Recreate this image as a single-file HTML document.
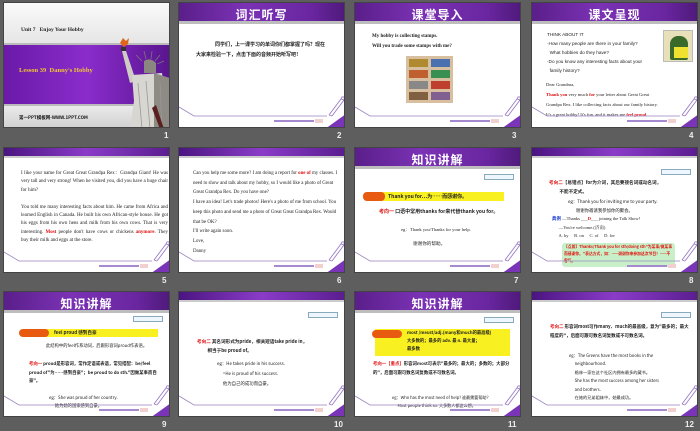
<!DOCTYPE html>
<html><head><meta charset="utf-8"><style>
*{margin:0;padding:0;box-sizing:border-box}
body{width:700px;height:431px;background:#5e5e5e;position:relative;overflow:hidden;font-family:"Liberation Serif","Noto Serif CJK SC",serif}
.s{position:absolute;width:167px;height:126px;background:#fff;overflow:hidden;border:1px solid #444}
.n{position:absolute;color:#eee;font:bold 8px "Liberation Sans",sans-serif}
.hd{position:absolute;left:0;top:0;width:100%;height:21px;background:linear-gradient(90deg,#5a1f8a,#7b32b5 40%,#6a26a0 80%,#4f1a7c);border-bottom:3px solid #bdbdbd}
.hd b{position:absolute;left:0;right:0;top:3px;text-align:center;color:#fff;font:bold 12px "Noto Sans CJK SC",sans-serif;letter-spacing:1px}
.th{position:absolute;left:0;top:0;width:100%;height:10px;background:linear-gradient(90deg,#4a1580,#8a3cc8 50%,#5a1e90);border-bottom:2px solid #ccc}
.t{position:absolute;font-size:5px;line-height:8px;color:#222}
.r{color:#e01010;font-weight:bold}
.tag{position:absolute;right:6px;width:30px;height:6px;border:1px solid #8ab;background:#eef6ff}
.ft{position:absolute;left:0;top:0}
.cn{font-family:"Noto Sans CJK SC",sans-serif}
</style></head><body>

<svg width="0" height="0" style="position:absolute"><defs>
<g id="ftr"><polyline points="0,104 15,113 148,113" fill="none" stroke="#9b84c0" stroke-width="0.8"/>
<polygon points="146,126 167,126 167,111" fill="#7a34b8"/>
<path d="M150,112 L162,96 M153,113 L165,97 M150,112 L153,113 M162,96 L165,97 Q166,93 163,94 Z" stroke="#9a7cc6" stroke-width="0.9" fill="none"/>
<rect x="95" y="117" width="40" height="2" fill="#a58ad0"/><rect x="136" y="116" width="8" height="4" fill="#f3d0d0"/></g>
</defs></svg>

<!-- slide 1 -->
<div class="s" style="left:3px;top:2px;background:linear-gradient(#fafafa,#e4e4e4 35%,#ddd)">
<div style="position:absolute;left:0;top:40px;width:100%;height:63px;background:linear-gradient(90deg,#6a1aa8,#8a2ccc 50%,#5a1590);border-top:2px solid #bbb;border-bottom:2px solid #bbb"></div>
<div style="position:absolute;left:0;top:103px;width:100%;height:23px;background:linear-gradient(#eaeaea,#d0d0d0)"></div>
<div class="t" style="left:17px;top:23px;font-size:5.5px;font-weight:bold">Unit 7 &nbsp; Enjoy Your Hobby</div>
<div class="t" style="left:15px;top:64px;font-size:6.5px;font-weight:bold;color:#f2c530">Lesson 39 &nbsp;Danny's Hobby</div>
<div class="t cn" style="left:15px;top:111px;font-size:4.5px;font-weight:bold;color:#111">第一PPT模板网-WWW.1PPT.COM</div>
<svg class="ft" width="167" height="126">
<path d="M120,44 L116,40 L119,35 L122,38 L125,35 L124,41 Z" fill="#e0641a"/>
<rect x="117" y="44" width="5" height="4" fill="#333"/>
<path d="M118,48 L122,48 L132,78 L126,80 Z" fill="#cfcbc5"/>
<path d="M138,58 L132,52 M142,56 L140,48 M147,56 L148,48 M151,58 L156,52 M153,61 L160,58" stroke="#777" stroke-width="0.8"/>
<path d="M140,58 Q146,54 152,60 L152,70 L140,70 Z" fill="#8a8680"/>
<path d="M128,72 L158,70 L166,126 L126,126 L130,98 Z" fill="#d8d6d0"/>
<path d="M150,70 L166,75 L166,126 L150,126 Z" fill="#8e8a84"/>
<path d="M134,80 L138,126 M142,78 L146,126 M156,80 L158,126" stroke="#999" stroke-width="0.8"/>
<path d="M148,105 L156,126 L160,126 L152,102 Z" fill="#5a2020"/></svg>
</div>
<div class="n" style="left:164px;top:131px">1</div>

<!-- slide 2 -->
<div class="s" style="left:178px;top:2px">
<div class="hd"><b>词汇听写</b></div>
<div class="t cn" style="left:28px;top:37px;font-size:5px;font-weight:bold;line-height:10px;width:135px">&nbsp; &nbsp; &nbsp; &nbsp;同学们，上一课学习的单词你们都掌握了吗？现在</div>
<div class="t cn" style="left:17px;top:37px;font-size:5px;font-weight:bold;line-height:10px;width:145px;text-indent:11px"></div>
<div class="t cn" style="left:17px;top:47px;font-size:5px;font-weight:bold;line-height:10px">大家来检验一下，点击下面的音频开始听写吧！</div>
<svg class="ft" width="167" height="126"><use href="#ftr"/></svg>
</div>
<div class="n" style="left:337px;top:131px">2</div>

<!-- slide 3 -->
<div class="s" style="left:354px;top:2px">
<div class="hd"><b>课堂导入</b></div>
<div class="t" style="left:17px;top:29px;font-weight:bold;font-size:5px;line-height:10px">My hobby is collecting stamps.<br>Will you trade some stamps with me?</div>
<div style="position:absolute;left:51px;top:53px;width:47px;height:47px;background:#d8bfa0;padding:3px;display:grid;grid-template-columns:1fr 1fr;gap:3px">
<i style="background:#b08a30"></i><i style="background:#4a70b0"></i><i style="background:#c06030"></i><i style="background:#3a9050"></i><i style="background:#888"></i><i style="background:#c04030"></i><i style="background:#806040"></i><i style="background:#806090"></i></div>
<svg class="ft" width="167" height="126"><use href="#ftr"/></svg>
</div>
<div class="n" style="left:512px;top:131px">3</div>

<!-- slide 4 -->
<div class="s" style="left:531px;top:2px">
<div class="hd"><b>课文呈现</b></div>
<div style="position:absolute;left:131px;top:27px;width:30px;height:32px;background:#e8e0b8;border:1px solid #bbb"><div style="position:absolute;left:6px;top:5px;width:18px;height:24px;background:#3a6a2a;border-radius:8px 8px 2px 2px"></div><div style="position:absolute;left:10px;top:16px;width:14px;height:11px;background:#f0e030"></div></div>
<div class="t" style="left:15px;top:27px;font-family:'Liberation Sans',sans-serif;font-size:4.7px;line-height:9px">THINK ABOUT IT<br>·How many people are there in your family?<br>&nbsp; What hobbies do they have?<br>·Do you know any interesting facts about your<br>&nbsp; family history?</div>
<div class="t" style="left:14px;top:77px;font-size:4.6px;line-height:10px;white-space:nowrap">Dear Grandma,<br><span class="r">Thank you</span> very much <span class="r">for</span> your letter about Great Great<br>Grandpa Rex. I like collecting facts about our family history.<br>It's a great hobby! It's fun, and it makes me <span class="r">feel proud</span>.</div>
<svg class="ft" width="167" height="126"><use href="#ftr"/></svg>
</div>
<div class="n" style="left:689px;top:131px">4</div>

<!-- slide 5 -->
<div class="s" style="left:3px;top:147px">
<div class="th"></div>
<div class="t" style="left:17px;top:22px;font-size:5px;line-height:8.4px;width:147px;text-align:justify">I like your name for Great Great Grandpa Rex：Grandpa Giant! He was very tall and very strong! When he visited you, did you have a huge chair for him?<br><br>You told me many interesting facts about him. He came from Africa and learned English in Canada. He built his own African-style house. He got his eggs from his own hens and milk from his own cows. That is very interesting. <span class="r">Most</span> people don't have cows or chickens <span class="r">anymore</span>. They buy their milk and eggs at the store.</div>
<svg class="ft" width="167" height="126"><use href="#ftr"/></svg>
</div>
<div class="n" style="left:162px;top:276px">5</div>

<!-- slide 6 -->
<div class="s" style="left:178px;top:147px">
<div class="th"></div>
<div class="t" style="left:14px;top:21px;font-size:4.9px;line-height:9.7px;width:151px">Can you help me some more? I am doing a report for <span class="r">one of</span> my classes. I need to show and talk about my hobby, so I would like a photo of Great Great Grandpa Rex. Do you have one?<br>I have an idea! Let's trade photos! Here's a photo of me from school. You keep this photo and send me a photo of Great Great Grandpa Rex. Would that be OK?<br>I'll write again soon.<br>Love,<br>Danny</div>
<svg class="ft" width="167" height="126"><use href="#ftr"/></svg>
</div>
<div class="n" style="left:337px;top:276px">6</div>

<!-- slide 7 -->
<div class="s" style="left:354px;top:147px">
<div class="hd"><b>知识讲解</b></div>
<div class="tag" style="top:26px"></div>
<div style="position:absolute;left:17px;top:44px;width:132px;height:9px;background:#f8f020"></div>
<div style="position:absolute;left:8px;top:44px;width:22px;height:9px;background:#e85a10;border-radius:4px"></div>
<div class="t cn" style="left:33px;top:44px;font-weight:bold;font-size:5px;line-height:9px">Thank you for…为……而感谢你。</div>
<div class="t cn" style="left:24px;top:60px;font-weight:bold;font-size:5px"><span class="r">考向一</span> 口语中常用thanks for来代替thank you for。</div>
<div class="t" style="left:46px;top:78px;font-size:4.6px">eg：Thank you/Thanks for your help.</div>
<div class="t cn" style="left:58px;top:92px;font-size:4.6px">谢谢你的帮助。</div>
<svg class="ft" width="167" height="126"><use href="#ftr"/></svg>
</div>
<div class="n" style="left:514px;top:276px">7</div>

<!-- slide 8 -->
<div class="s" style="left:531px;top:147px">
<div class="th"></div>
<div class="tag" style="top:21px"></div>
<div class="t cn" style="left:17px;top:31px;font-size:4.6px;font-weight:bold;line-height:9px"><span class="r">考向二</span>【易错点】for为介词，其后要接名词或动名词，<br>&nbsp; &nbsp; &nbsp; &nbsp; &nbsp; 不能不定式。</div>
<div class="t cn" style="left:36px;top:50px;font-size:4.4px;line-height:8.5px">eg：Thank you for inviting me to your party.<br>&nbsp; &nbsp; &nbsp; &nbsp; 谢谢你邀请我参加你的聚会。</div>
<div class="t" style="left:20px;top:67px;font-size:4.5px;line-height:8.5px"><span style="color:#2040d0;font-weight:bold" class="cn">典例</span> —Thanks ___<span class="r">D</span>___ joining the Talk Show!<br>&nbsp; &nbsp; &nbsp; —You're welcome.(济南)<br>&nbsp; &nbsp; &nbsp; A. by &nbsp; &nbsp; B. on &nbsp; &nbsp; C. of &nbsp; &nbsp; D. for</div>
<div class="t cn r" style="left:30px;top:95px;width:113px;height:24px;background:#c8f0c8;border-radius:3px;font-size:3.8px;line-height:6.8px;padding:2px">【点拨】Thanks/Thank you for sth/doing sth"为某事/做某事而感谢你。"表达方式，如：——谢谢你来参加这次节目！——不客气。</div>
<svg class="ft" width="167" height="126"><use href="#ftr"/></svg>
</div>
<div class="n" style="left:689px;top:276px">8</div>

<!-- slide 9 -->
<div class="s" style="left:3px;top:291px">
<div class="hd"><b>知识讲解</b></div>
<div class="tag" style="top:24px"></div>
<div style="position:absolute;left:24px;top:37px;width:130px;height:8px;background:#f8f020"></div>
<div style="position:absolute;left:15px;top:37px;width:30px;height:8px;background:#e85a10;border-radius:4px"></div>
<div class="t cn" style="left:50px;top:37px;font-weight:bold;font-size:4.6px">feel proud 感到自豪</div>
<div class="t cn" style="left:42px;top:50px;font-size:4.3px;line-height:8px;width:112px">此结构中的feel作系动词，后跟形容词proud作表语。</div>
<div class="t cn" style="left:25px;top:68px;font-size:4.4px;line-height:8.5px;font-weight:bold;width:134px"><span class="r">考向一</span> proud是形容词，常作定语或表语，常见搭配：be/feel proud of"为……感到自豪"；be proud to do sth."因做某事而自豪"。</div>
<div class="t cn" style="left:45px;top:102px;font-size:4.3px;line-height:8px">eg：She was proud of her country.<br>&nbsp; &nbsp; &nbsp; 她为她的国家感到自豪。</div>
<svg class="ft" width="167" height="126"><use href="#ftr"/></svg>
</div>
<div class="n" style="left:162px;top:420px">9</div>

<!-- slide 10 -->
<div class="s" style="left:178px;top:291px">
<div class="th"></div>
<div class="tag" style="top:20px"></div>
<div class="t cn" style="left:18px;top:46px;font-size:4.6px;line-height:9px;font-weight:bold"><span class="r">考向二</span> 其名词形式为pride，相关短语take pride in，<br>&nbsp; &nbsp; &nbsp; &nbsp; &nbsp; 相当于be proud of。</div>
<div class="t cn" style="left:38px;top:67px;font-size:4.4px;line-height:10px">eg：He takes pride in his success.<br>&nbsp; &nbsp; &nbsp; =He is proud of his success.<br>&nbsp; &nbsp; &nbsp; 他为自己的成功而自豪。</div>
<svg class="ft" width="167" height="126"><use href="#ftr"/></svg>
</div>
<div class="n" style="left:334px;top:420px">10</div>

<!-- slide 11 -->
<div class="s" style="left:354px;top:291px">
<div class="hd"><b>知识讲解</b></div>
<div class="tag" style="top:25px"></div>
<div style="position:absolute;left:20px;top:37px;width:135px;height:27px;background:#f8f020"></div>
<div style="position:absolute;left:17px;top:38px;width:30px;height:8px;background:#e85a10;border-radius:4px"></div>
<div class="t cn" style="left:52px;top:37px;font-weight:bold;font-size:4.3px;line-height:8px">most /məʊst/adj.(many和much的最高级)<br>大多数的；最多的 adv. 最 n. 最大量；<br>最多数</div>
<div class="t cn" style="left:18px;top:68px;font-weight:bold;font-size:4.4px;line-height:8.5px;width:140px"><span class="r">考向一【重点】</span>形容词most可表示"最多的；最大的；多数的；大部分的"，后面可跟可数名词复数或不可数名词。</div>
<div class="t cn" style="left:37px;top:102px;font-size:4.1px;line-height:8px">eg：Who has the most need of help? 谁最需要帮助？<br>&nbsp; &nbsp; &nbsp; Most people think so. 大多数人都这么想。</div>
<svg class="ft" width="167" height="126"><use href="#ftr"/></svg>
</div>
<div class="n" style="left:508px;top:420px">11</div>

<!-- slide 12 -->
<div class="s" style="left:531px;top:291px">
<div class="th"></div>
<div class="tag" style="top:20px"></div>
<div class="t cn" style="left:18px;top:31px;font-weight:bold;font-size:4.5px;line-height:8.7px;width:142px"><span class="r">考向二</span> 形容词most可作many、much的最高级，意为"最多的；最大程度的"，后面可跟可数名词复数或不可数名词。</div>
<div class="t cn" style="left:37px;top:60px;font-size:4.2px;line-height:8.4px">eg：The Greens have the most books in the<br>&nbsp; &nbsp; &nbsp; neighbourhood.<br>&nbsp; &nbsp; &nbsp; 格林一家在这个社区内拥有最多的藏书。<br>&nbsp; &nbsp; &nbsp; She has the most success among her sisters<br>&nbsp; &nbsp; &nbsp; and brothers.<br>&nbsp; &nbsp; &nbsp; 在她的兄弟姐妹中，她最成功。</div>
<svg class="ft" width="167" height="126"><use href="#ftr"/></svg>
</div>
<div class="n" style="left:685px;top:420px">12</div>

</body></html>
